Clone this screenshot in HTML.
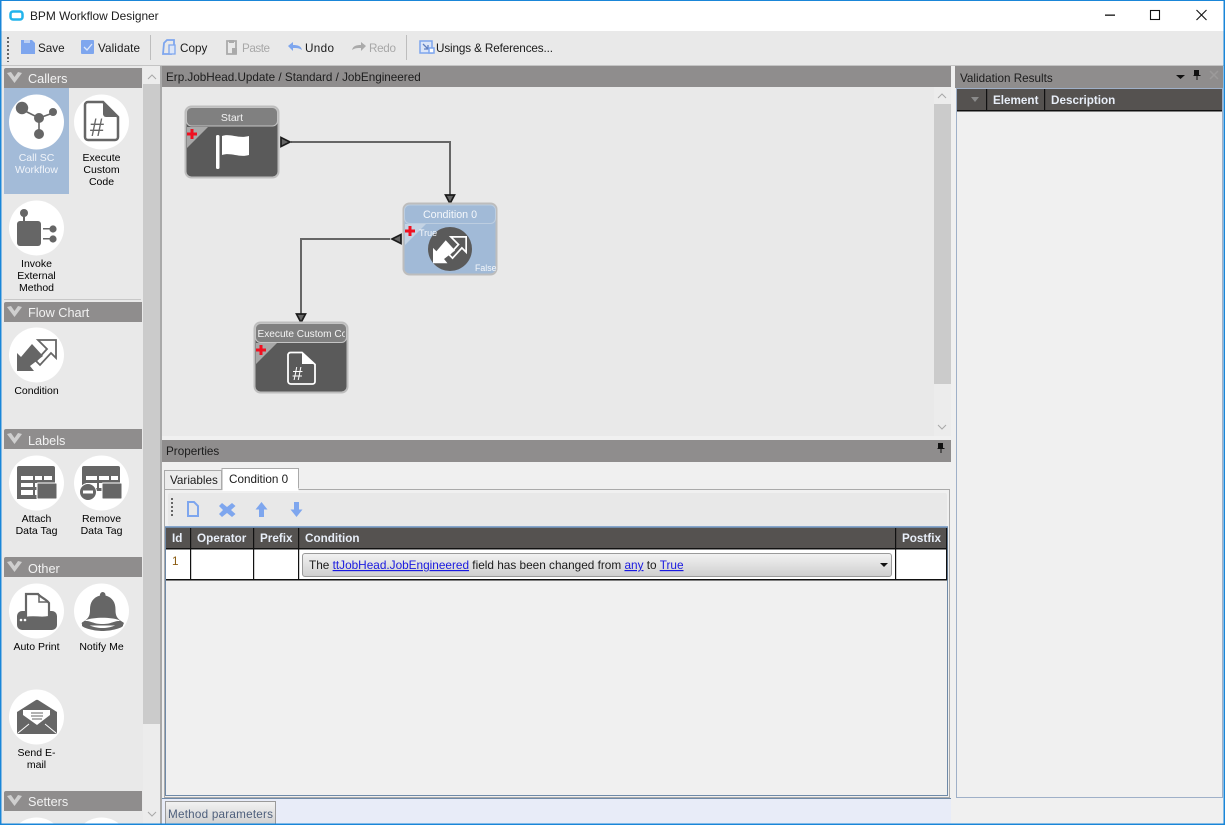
<!DOCTYPE html>
<html><head><meta charset="utf-8"><title>BPM Workflow Designer</title>
<style>
html,body{margin:0;padding:0;width:1225px;height:825px;background:#f0f0f0;overflow:hidden}
svg{display:block}
text{font-family:"Liberation Sans",sans-serif;font-size:11.700px;fill:#1c1c1c}
.hd{fill:#f2f2f2;font-size:12.700px}
.lb{font-size:10.500px;fill:#000;text-anchor:middle}
.th{fill:#e8eef8;font-weight:bold;font-size:11.700px}
.ln{fill:#1a1ae0;text-decoration:underline}
.i{fill:#666}
</style></head><body>
<svg width="1225" height="825" viewBox="0 0 1225 825" xmlns="http://www.w3.org/2000/svg">
<defs>
<linearGradient id="cb" x1="0" y1="0" x2="0" y2="1"><stop offset="0" stop-color="#f2f2f2"/><stop offset="1" stop-color="#cfcfcf"/></linearGradient>
<path id="chev" d="M0 1L4 0L7.500 5L11 0L15 1L7.500 11z" fill="#cfcfcf"/>
</defs>
<rect width="1225" height="825" fill="#f0f0f0"/>
<rect y="0" width="1225" height="31" fill="#fff"/>
<rect y="31" width="1225" height="34" fill="#e9e9e9"/>
<rect y="65" width="1225" height="1" fill="#c4c4c4"/>
<!-- title -->
<rect x="10.500" y="11.500" width="12" height="8" rx="2.500" fill="#fff" stroke="#22b4ec" stroke-width="2.500"/>
<text x="30" y="20" style="font-size:11.900px">BPM Workflow Designer</text>
<rect x="1105" y="14.500" width="10" height="1.300" fill="#111"/>
<rect x="1150.500" y="10.500" width="9" height="9" fill="none" stroke="#111" stroke-width="1.100"/>
<path d="M1196.500 10l10 10m0-10l-10 10" stroke="#111" stroke-width="1.100"/>
<!-- toolbar -->
<path d="M8 37v25" stroke="#666" stroke-width="2" stroke-dasharray="2 2"/>
<path d="M21 40h11l3 3v11H21z" fill="#7ea6ee"/><rect x="24" y="40" width="6" height="3" fill="#bcd0f4"/>
<text x="38" y="52">Save</text>
<rect x="81" y="40" width="13" height="14" rx="1" fill="#7ea6ee"/><path d="M84 47l3 3 5-6" fill="none" stroke="#dde8fb" stroke-width="1.300"/>
<text x="98" y="52" textLength="42">Validate</text>
<rect x="150" y="35" width="1" height="25" fill="#bdbdbd"/>
<path d="M164 43l3-3h7v9h-3v5h-8z" fill="none" stroke="#7ea6ee" stroke-width="1.800"/>
<path d="M169 45h6v9h-6z" fill="#dce6f8" stroke="#7ea6ee" stroke-width="1.300"/>
<text x="180" y="52">Copy</text>
<path d="M227 41h9v13h-9z" fill="none" stroke="#aaa" stroke-width="1.800"/><rect x="229" y="40" width="5" height="3" fill="#aaa"/><rect x="232" y="48" width="5" height="6" fill="#aaa"/>
<text x="242" y="52" style="fill:#a8a8a8" textLength="28">Paste</text>
<path d="M288 46l5-4v3c5 0 8 1 9 5-3-2-5-2-9-2v3z" fill="#7ea6ee"/>
<text x="305" y="52" textLength="29">Undo</text>
<path d="M366 46l-5-4v3c-5 0-8 1-9 5 3-2 5-2 9-2v3z" fill="#aaa"/>
<text x="369" y="52" style="fill:#a8a8a8" textLength="27">Redo</text>
<rect x="406" y="35" width="1" height="25" fill="#bdbdbd"/>
<rect x="420" y="41" width="12" height="12" fill="#dce6f8" stroke="#7ea6ee" stroke-width="1.500"/><path d="M423 44l5 5m0-4v4h-4" fill="none" stroke="#5f7fc0" stroke-width="1.300"/><rect x="429" y="48" width="5" height="5" fill="#fff" stroke="#7ea6ee" stroke-width="1.500"/>
<text x="436" y="52" textLength="117">Usings &amp; References...</text>

<!-- left panel -->
<rect x="2" y="66" width="141" height="759" fill="#e9e9e9"/>
<rect x="143" y="66" width="17" height="759" fill="#ececec"/>
<rect x="143" y="84" width="17" height="640" fill="#cbcbcb"/>
<path d="M148 79l4-4 4 4M148 812l4 4 4-4" fill="none" stroke="#a8a8a8" stroke-width="1"/>
<rect x="160" y="66" width="2" height="759" fill="#a9a9a9"/>
<rect x="4" y="299" width="137" height="1" fill="#c8c8c8"/>
<g>
<path d="M4 70a2 2 0 0 1 2-2h136v20H4z" fill="#8f8d8d"/><use href="#chev" x="7" y="72"/><text x="28" y="83" class="hd">Callers</text>
<path d="M4 304a2 2 0 0 1 2-2h136v20H4z" fill="#8f8d8d"/><use href="#chev" x="7" y="306"/><text x="28" y="317" class="hd">Flow Chart</text>
<path d="M4 431a2 2 0 0 1 2-2h136v20H4z" fill="#8f8d8d"/><use href="#chev" x="7" y="433"/><text x="28" y="445" class="hd">Labels</text>
<path d="M4 559a2 2 0 0 1 2-2h136v20H4z" fill="#8f8d8d"/><use href="#chev" x="7" y="561"/><text x="28" y="573" class="hd">Other</text>
<path d="M4 793a2 2 0 0 1 2-2h136v20H4z" fill="#8f8d8d"/><use href="#chev" x="7" y="795"/><text x="28" y="806" class="hd">Setters</text>
</g>
<rect x="4" y="88" width="65" height="106" fill="#a3bbd8"/>
<g fill="#fff">
<circle cx="36.500" cy="122" r="27.500"/><circle cx="101.500" cy="122" r="27.500"/>
<circle cx="36.500" cy="228" r="27.500"/><circle cx="36.500" cy="355" r="27.500"/>
<circle cx="36.500" cy="483" r="27.500"/><circle cx="101.500" cy="483" r="27.500"/>
<circle cx="36.500" cy="611" r="27.500"/><circle cx="101.500" cy="611" r="27.500"/>
<circle cx="36.500" cy="717" r="27.500"/>
<path d="M17.600 825A27.500 27.500 0 0 1 55.400 825z"/><path d="M82.600 825A27.500 27.500 0 0 1 120.400 825z"/>
</g>
<!-- call sc -->
<g fill="#666"><path d="M23 110l16 8 14-5M39 118v17" stroke="#666" stroke-width="1.600" fill="none"/>
<circle cx="22" cy="108" r="6.200"/><circle cx="39" cy="118" r="5"/><circle cx="53" cy="112" r="4"/><circle cx="39" cy="134" r="5"/></g>
<!-- custom code -->
<path d="M88 102h15l15 15v20a3 3 0 0 1-3 3H88a3 3 0 0 1-3-3V105a3 3 0 0 1 3-3z" fill="#fff" stroke="#666" stroke-width="2.500"/>
<path d="M103 102l15 15h-12a3 3 0 0 1-3-3z" fill="#666"/>
<text x="97" y="136" text-anchor="middle" style="font-size:25px;fill:#666">#</text>
<!-- invoke -->
<g fill="#666"><circle cx="24" cy="213" r="4"/><rect x="23" y="215" width="2" height="8"/><rect x="17" y="221" width="24" height="25" rx="3"/>
<circle cx="53" cy="229" r="3.600"/><circle cx="53" cy="239" r="3.600"/><rect x="43" y="228" width="8" height="1.500"/><rect x="43" y="238" width="8" height="1.500"/></g>
<!-- condition -->
<path d="M38 340H56V358L51 353L40 365L36 361L47 349z" fill="#fff" stroke="#666" stroke-width="1.800"/>
<path d="M17 353L21 357L32 344L43 356L30 366L34 371H17z" class="i"/>
<!-- attach -->
<path d="M19 466h34a2 2 0 0 1 2 2v31H17v-31a2 2 0 0 1 2-2z" class="i"/>
<g fill="#fff"><rect x="21" y="476" width="12" height="4"/><rect x="35" y="476" width="7" height="4"/><rect x="44" y="476" width="8" height="4"/><rect x="21" y="483" width="12" height="4"/><rect x="35" y="483" width="5" height="4"/><rect x="21" y="490" width="12" height="5"/><rect x="35" y="490" width="2" height="5"/></g>
<rect x="37" y="483" width="20" height="16" rx="1" fill="#666" stroke="#fff" stroke-width="1"/>
<!-- remove -->
<path d="M84 466h34a2 2 0 0 1 2 2v23H82v-23a2 2 0 0 1 2-2z" class="i"/>
<g fill="#fff"><rect x="86" y="476" width="11" height="4"/><rect x="99" y="476" width="10" height="4"/><rect x="111" y="476" width="7" height="4"/><rect x="86" y="483" width="11" height="5"/><rect x="99" y="483" width="3" height="5"/></g>
<rect x="102" y="483" width="20" height="16" rx="1" fill="#666" stroke="#fff" stroke-width="1"/>
<circle cx="88" cy="492" r="8.500" fill="#666" stroke="#fff" stroke-width="1"/><rect x="83" y="490.500" width="10" height="3" fill="#fff"/>
<!-- print -->
<path d="M17 616a5 5 0 0 1 5-5h30a5 5 0 0 1 5 5v9a5 5 0 0 1-5 5H22a5 5 0 0 1-5-5z" class="i"/>
<path d="M26 594h12c2 3 8 5 11 9v14c-8 2-15-1-23 1z" fill="#fff" stroke="#666" stroke-width="2.200"/>
<path d="M39 594v8h9" fill="none" stroke="#666" stroke-width="1.500"/>
<circle cx="21" cy="620" r="1.300" fill="#fff"/><circle cx="25" cy="620" r="1.300" fill="#fff"/>
<!-- bell -->
<path d="M102.500 592a3 3 0 0 1 3 3.500c7 2 10 7 10 14 0 6 1 9 8 13 1 2-1 3-3 3H85c-2 0-4-1-3-3 7-4 8-7 8-13 0-7 3-12 10-14a3 3 0 0 1 2.500-3.500z" class="i"/>
<path d="M86 620c8-3 25-3 33 0l1 1c-6-.5-8 3-17.500 3s-11.500-3.500-17.500-3z" fill="#fff"/>
<path d="M82 624c6-.500 10 4 20.500 4s14-4.500 20.500-4l0 2c-3 3-14 5-20.500 5s-17-2-20.500-5z" class="i"/>
<!-- mail -->
<path d="M17 712l19-12a2 2 0 0 1 2 0l19 12v20a2 2 0 0 1-2 2H19a2 2 0 0 1-2-2z" class="i"/>
<path d="M23 710h27v5l-13 10-14-10z" fill="#fff"/>
<path d="M31 713h12M31 716h12M32 719h10" stroke="#666" stroke-width="1"/>
<path d="M18 733l11-9M56 733l-11-9" stroke="#fff" stroke-width="1"/>
<g>
<text x="36.500" y="161" class="lb" style="fill:#f0f4fa">Call SC</text><text x="36.500" y="173" class="lb" style="fill:#f0f4fa">Workflow</text>
<text x="101.500" y="161" class="lb">Execute</text><text x="101.500" y="173" class="lb">Custom</text><text x="101.500" y="185" class="lb">Code</text>
<text x="36.500" y="267" class="lb">Invoke</text><text x="36.500" y="279" class="lb">External</text><text x="36.500" y="291" class="lb">Method</text>
<text x="36.500" y="394" class="lb">Condition</text>
<text x="36.500" y="522" class="lb">Attach</text><text x="36.500" y="534" class="lb">Data Tag</text>
<text x="101.500" y="522" class="lb">Remove</text><text x="101.500" y="534" class="lb">Data Tag</text>
<text x="36.500" y="650" class="lb">Auto Print</text><text x="101.500" y="650" class="lb">Notify Me</text>
<text x="36.500" y="756" class="lb">Send E-</text><text x="36.500" y="768" class="lb">mail</text>
</g>

<!-- center -->
<rect x="162" y="66" width="789" height="21" fill="#8f8d8d"/>
<text x="166" y="81">Erp.JobHead.Update / Standard / JobEngineered</text>
<rect x="162" y="87" width="789" height="349" fill="#e9e9e9"/>
<rect x="934" y="87" width="17" height="349" fill="#ececec"/>
<rect x="934" y="104" width="17" height="280" fill="#cbcbcb"/>
<path d="M938 98l4-4 4 4M938 425l4 4 4-4" fill="none" stroke="#a8a8a8"/>
<rect x="162" y="436" width="789" height="4" fill="#f0f0f0"/>
<!-- connectors -->
<path d="M291 142H450V195M390 239H301V314" fill="none" stroke="#666" stroke-width="2"/>
<path d="M281 137.500l9 4.500-9 4.500z" fill="#666" stroke="#1c1c1c" stroke-width="1.700"/>
<path d="M445.500 195l4.500 8.500 4.500-8.500z" fill="#666" stroke="#1c1c1c" stroke-width="1.700"/>
<path d="M401 234.500l-9 4.500 9 4.500z" fill="#666" stroke="#1c1c1c" stroke-width="1.700"/>
<path d="M296.500 314l4.500 8.500 4.500-8.500z" fill="#666" stroke="#1c1c1c" stroke-width="1.700"/>
<!-- start node -->
<rect x="185.500" y="106.500" width="93" height="71" rx="6" fill="#5a5a5a" stroke="#bdbdbd" stroke-width="2"/>
<rect x="186.500" y="107.500" width="91" height="18.500" rx="5" fill="#808080" stroke="#c4c4c4" stroke-width="1"/>
<path d="M187 127h21l-21 21z" fill="#a8a8a8"/>
<path d="M192 129v10M187 134h10" stroke="#f01020" stroke-width="3"/>
<text x="232" y="121" text-anchor="middle" style="fill:#f2f2f2;font-size:10.500px">Start</text>
<rect x="216" y="135" width="3.500" height="34" rx="1.500" fill="#fff"/>
<path d="M222 136c8-3 16 3 27 0v19c-10 3-18-3-27 0z" fill="#fff"/>
<!-- condition node -->
<rect x="403.500" y="203.500" width="93" height="71" rx="6" fill="#a1bad7" stroke="#bdbdbd" stroke-width="2"/>
<rect x="404.500" y="205" width="91" height="18.500" rx="5" fill="#a1bad7" stroke="#bccde0" stroke-width="1"/>
<path d="M405 224h21l-21 21z" fill="#c4d3e4"/>
<path d="M410 226v10M405 231h10" stroke="#f01020" stroke-width="3"/>
<text x="450" y="218" text-anchor="middle" style="fill:#f4f7fb;font-size:10.700px">Condition 0</text>
<circle cx="450" cy="249" r="22" fill="#5a5a5a"/>
<text x="419" y="236" style="fill:#f4f7fb;font-size:9px">True</text>
<text x="475" y="271" style="fill:#f4f7fb;font-size:8.800px">False</text>
<g transform="translate(433 236) scale(.85) translate(-17 -339)">
<path d="M38 340H56V358L51 353L40 365L36 361L47 349z" fill="none" stroke="#fff" stroke-width="2"/>
<path d="M17 353L21 357L32 344L43 356L30 366L34 371H17z" fill="#fff"/>
</g>
<!-- exec node -->
<rect x="254.500" y="322.500" width="93" height="70" rx="6" fill="#5a5a5a" stroke="#bdbdbd" stroke-width="2"/>
<rect x="255.500" y="323.500" width="91" height="19" rx="5" fill="#808080" stroke="#c4c4c4" stroke-width="1"/>
<path d="M256 343h21l-21 21z" fill="#a8a8a8"/>
<path d="M261 345v10M256 350h10" stroke="#f01020" stroke-width="3"/>
<svg x="256" y="324" width="89" height="18"><text x="1.500" y="13" style="fill:#f4f4f4;font-size:10.100px">Execute Custom Code</text></svg>
<path d="M291 352.500h11l13 12v17a2.500 2.500 0 0 1-2.500 2.500H291a3 3 0 0 1-3-2.500v-27a3 3 0 0 1 3-2z" fill="none" stroke="#fff" stroke-width="1.800"/>
<path d="M302 352l13 12h-13z" fill="#fff"/>
<text x="297.500" y="380" text-anchor="middle" style="fill:#fff;font-size:18px">#</text>

<!-- properties -->
<rect x="162" y="440" width="789" height="22" fill="#8f8d8d"/>
<text x="166" y="455">Properties</text>
<path d="M938 443h5v5h1.500v1h-3v4h-1v-4h-3v-1h.500z" fill="#111"/>
<rect x="162" y="462" width="789" height="336" fill="#f0f0f0"/>
<rect x="164.500" y="489.500" width="785" height="308" fill="#f0f0f0" stroke="#aaa"/>
<rect x="164.500" y="470.500" width="57" height="19" fill="#ececec" stroke="#aaa"/>
<text x="170" y="484">Variables</text>
<path d="M222 490v-21.500h76.500V490" fill="#fff" stroke="#aaa"/>
<rect x="222.500" y="488" width="76" height="3" fill="#fff"/>
<text x="229" y="483">Condition 0</text>
<rect x="168" y="493" width="779" height="33" rx="2" fill="#e8e8e8"/>
<path d="M172 498v20" stroke="#666" stroke-width="2" stroke-dasharray="2 2"/>
<path d="M188 502h6l4 4v10h-10z" fill="none" stroke="#7ea6ee" stroke-width="2"/>
<path d="M219 506l3-3 5 4 5-4 3.500 3-4.500 4 4.500 4-3.500 3-5-4-5 4-3-3 4-4z" fill="#7ea6ee"/>
<path d="M261.500 502l6 7.500h-3.500v7.500h-5v-7.500h-3.500z" fill="#7ea6ee"/>
<path d="M296.500 517l-6-7.500h3.500v-7.500h5v7.500h3.500z" fill="#7ea6ee"/>
<rect x="165" y="526" width="783" height="1.500" fill="#87a6cc"/>
<rect x="165.500" y="527.500" width="782" height="268" fill="#f0f0f0" stroke="#6f8aa8"/>
<rect x="166" y="528" width="781" height="21" fill="#555250"/>
<rect x="166" y="549" width="781" height="30" fill="#fff"/>
<rect x="166" y="548" width="781" height="1.500" fill="#111"/>
<rect x="166" y="579" width="781" height="1.500" fill="#111"/>
<g fill="#111"><rect x="190" y="528" width="1.200" height="52"/><rect x="253" y="528" width="1.200" height="52"/><rect x="298" y="528" width="1.200" height="52"/><rect x="895" y="528" width="1.200" height="52"/><rect x="946" y="528" width="1.200" height="52"/></g>
<text x="172" y="542" class="th">Id</text><text x="197" y="542" class="th">Operator</text><text x="260" y="542" class="th">Prefix</text><text x="305" y="542" class="th">Condition</text><text x="902" y="542" class="th">Postfix</text>
<text x="172" y="565" style="fill:#8a5a10">1</text>
<rect x="302.500" y="553.500" width="589" height="23" rx="2.500" fill="url(#cb)" stroke="#9a9a9a"/>
<text x="309" y="569" style="font-size:11.800px">The <tspan class="ln">ttJobHead.JobEngineered</tspan> field has been changed from <tspan class="ln">any</tspan> to <tspan class="ln">True</tspan></text>
<path d="M880 563h8l-4 4z" fill="#111"/>

<!-- bottom -->
<rect x="162" y="798" width="793" height="27" fill="#e8ecf8"/>
<rect x="162" y="798" width="793" height="1" fill="#6f8aa8"/>
<rect x="165.500" y="801.500" width="110" height="24" fill="url(#cb)" stroke="#9a9a9a"/>
<text x="168" y="818" style="fill:#4e5f7c" textLength="105">Method parameters</text>

<!-- validation -->
<rect x="951" y="66" width="4" height="759" fill="#f0f0f0"/>
<rect x="955" y="66" width="268" height="22" fill="#8f8d8d"/>
<text x="960" y="82">Validation Results</text>
<path d="M1176 75h9l-4.500 4z" fill="#111"/>
<path d="M1194 70h5v5h1.500v1h-3v4h-1v-4h-3v-1h.500z" fill="#111"/>
<path d="M1210 71l8 8m0-8l-8 8" stroke="#9c9a9a" stroke-width="1.500"/>
<rect x="956.500" y="88.500" width="266" height="709" fill="#f0f0f0" stroke="#9fb0c8"/>
<rect x="957" y="89" width="265" height="21" fill="#555250"/>
<rect x="957" y="110" width="265" height="1.500" fill="#111"/>
<rect x="986" y="89" width="1.200" height="21" fill="#111"/><rect x="1044" y="89" width="1.200" height="21" fill="#111"/>
<path d="M971 97h8l-4 5z" fill="#8a8a8a"/>
<text x="993" y="104" class="th">Element</text><text x="1051" y="104" class="th">Description</text>

<!-- window border -->
<rect x="0" y="0" width="1225" height="1" fill="#1a86d8"/>
<rect x="0" y="0" width="1.500" height="825" fill="#1a86d8"/>
<rect x="1223.500" y="0" width="1.500" height="825" fill="#1a86d8"/>
<rect x="0" y="823.500" width="1225" height="1.500" fill="#1a86d8"/>
</svg>
</body></html>
